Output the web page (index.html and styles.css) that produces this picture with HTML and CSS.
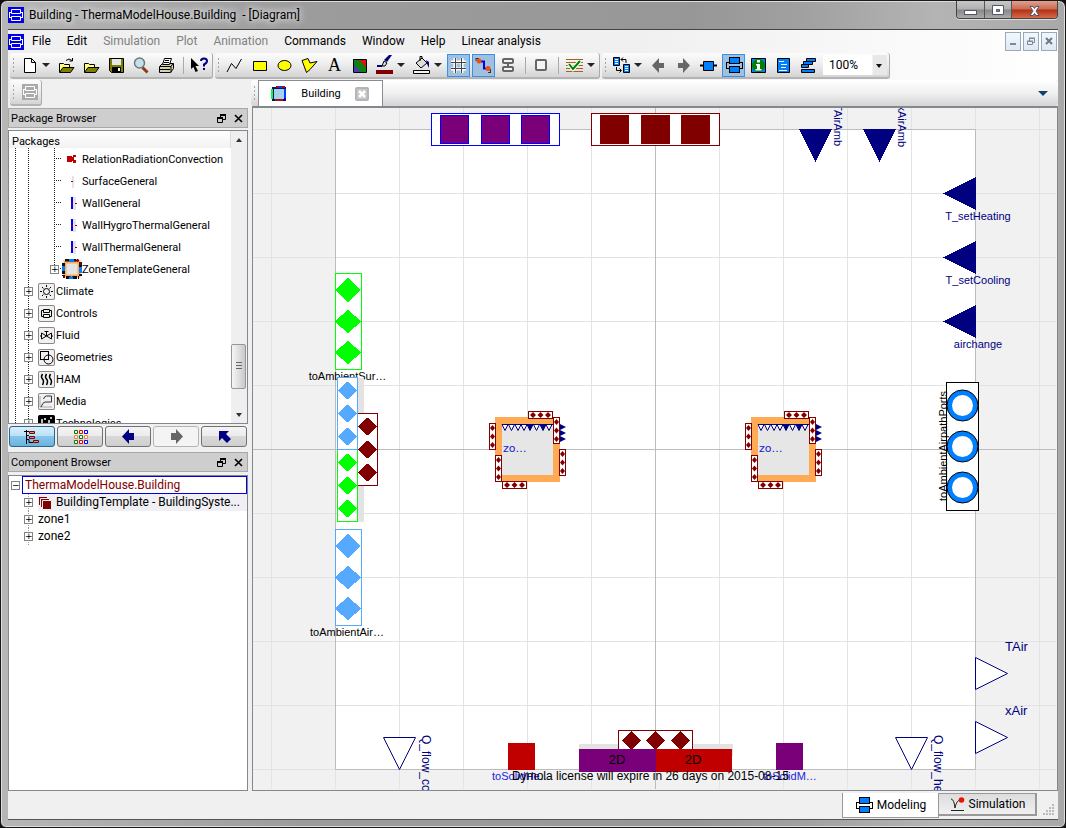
FILE: index.html
```html
<!DOCTYPE html>
<html lang="en">
<head>
<meta charset="utf-8">
<title>Building - ThermaModelHouse.Building - [Diagram]</title>
<link rel="stylesheet" href="styles.css">
</head>
<body>
<svg class="defs" aria-hidden="true">
  <defs>
    <symbol id="logo" viewBox="0 0 16 16"><rect width="16" height="16" fill="#0000e8"/><path d="M3.5 2.5h9v4h-9zM3.5 9.5h9v4h-9zM1 5.500h2.500M12.500 5.500H15M1 10.500h2.500M12.500 10.500H15M1.500 5.500v5M14.500 5.500v5" fill="none" stroke="#fff"/></symbol>
    <symbol id="float" viewBox="0 0 9 9"><path d="M3 1h6M0 4h6" stroke="#000" stroke-width="2"/><path d="M3.500 1v3M8.500 1v4.500H6M.5 4v4.500h5V4" fill="none" stroke="#000"/></symbol>
    <symbol id="cross" viewBox="0 0 9 9"><path d="M1 1l7 7M8 1L1 8" stroke="#000" stroke-width="1.600"/></symbol>
    <symbol id="folder" viewBox="0 0 17 15"><path d="M1.500 13V4.500h4l1 1h5V8" fill="#ffff80" stroke="#000"/><path d="M1.500 13.500L5 8.500h11L12.500 13.500z" fill="#808000" stroke="#000"/></symbol>
    <symbol id="model" viewBox="0 0 18 18"><rect x="4.500" y="1.500" width="10" height="6" fill="#0080ff" stroke="#000"/><rect x="4.500" y="10.500" width="10" height="6" fill="#0080ff" stroke="#000"/><path d="M1 6.500h3.500M14.500 6.500H18M1 12.500h3.500M14.500 12.500H18M1.500 6.500v6M17.500 6.500v6" stroke="#000"/></symbol>
    <symbol id="wall" viewBox="0 0 16 16"><path d="M9 2h3v13H9z" fill="#e4e4e4"/><path d="M7 2h2v12H7z" fill="#00f"/><path d="M11 8.500h2M7 8.500h2" stroke="#900"/></symbol>
    <symbol id="port3" viewBox="0 0 25 8"><rect x=".5" y=".5" width="24" height="7" fill="#fff" stroke="#800000"/><path d="M5 1l3 3-3 3-3-3zM12.500 1l3 3-3 3-3-3zM20 1l3 3-3 3-3-3z" fill="#800000"/></symbol>
    <symbol id="port3v" viewBox="0 0 7 27"><rect x=".5" y=".5" width="6" height="26" fill="#fff" stroke="#800000"/><path d="M3.500 2l2.500 3-2.500 3L1 5zM3.500 10.500l2.500 3-2.500 3-2.500-3zM3.500 19l2.500 3-2.500 3L1 22z" fill="#800000"/></symbol>
    <pattern id="grid" x="271" y="129" width="64" height="64" patternUnits="userSpaceOnUse"><path d="M.5 0v64M0 .5h64" stroke="#e3e3e3"/></pattern>
    <g id="zone">
      <rect x="495" y="417" width="65" height="65" fill="#ffaa55"/>
      <rect x="502" y="424" width="51" height="51" fill="#e6e6e6"/>
      <g stroke="#000080" fill="#fff">
        <path d="M502 424.500h6l-3 6zM508.500 424.500h6l-3 6zM515 424.500h6l-3 6zM521 424.500h6l-3 6zM533.500 424.500h6l-3 6zM546 424.500h6l-3 6z"/>
        <path d="M527 424.500h6l-3 6zM540 424.500h6l-3 6zM502 424.500h51" fill="#000080"/>
      </g>
      <use href="#port3" x="528" y="411" width="25" height="8"/>
      <use href="#port3" x="502" y="481" width="25" height="8"/>
      <use href="#port3v" x="553" y="417" width="7" height="27"/>
      <use href="#port3v" x="489" y="423" width="7" height="27"/>
      <use href="#port3v" x="495" y="455" width="7" height="27"/>
      <use href="#port3v" x="559" y="449" width="7" height="27"/>
      <path d="M560 424l6 3-6 3zM560 430l6 3-6 3zM560 436l6 3-6 3z" fill="#000080"/>
      <text x="503" y="452" fill="#2020d0" class="dg-ui">zo…</text>
    </g>
  </defs>
</svg>

<div class="window">
  <header class="titlebar">
    <svg class="i16"><use href="#logo"/></svg>
    <h1>Building - ThermaModelHouse.Building&nbsp; - [Diagram]</h1>
    <div class="winctl">
      <button aria-label="Minimize"><svg width="27" height="17"><rect x="7.500" y="9.500" width="12" height="4" fill="#fff" stroke="#535666"/></svg></button>
      <button aria-label="Maximize"><svg width="26" height="17"><path d="M7.500 4.500h11v9h-11zM11.500 8.500h3v2h-3z" fill="#fff" fill-rule="evenodd" stroke="#535666"/></svg></button>
      <button class="close" aria-label="Close"><svg width="45" height="17"><path d="M18 5.500h3l1.500 2 1.500-2h3l-3 4.500 3 4.500h-3l-1.500-2-1.500 2h-3l3-4.500z" fill="#fff" stroke="#535666"/></svg></button>
    </div>
  </header>

  <div class="client">
    <nav class="menubar">
      <svg class="i16"><use href="#logo"/></svg>
      <button>File</button><button>Edit</button><button disabled>Simulation</button><button disabled>Plot</button><button disabled>Animation</button><button>Commands</button><button>Window</button><button>Help</button><button>Linear analysis</button>
      <div class="mdi">
        <button aria-label="Minimize document"><svg width="14" height="14"><path d="M4 10h6" stroke="#7b8a98" stroke-width="2"/></svg></button>
        <button aria-label="Restore document"><svg width="14" height="14"><path d="M5.500 7V4.500h5v4H8M3.500 7.500h5v3h-5zM5 4h6M3 7h6" fill="none" stroke="#7b8a98"/></svg></button>
        <button aria-label="Close document"><svg width="14" height="14"><path d="M4 4l6 6M10 4l-6 6" stroke="#6b7a88" stroke-width="2"/></svg></button>
      </div>
    </nav>

    <div class="toolrow">
      <div class="toolbar">
        <i class="grip"></i>
        <button class="tb" aria-label="New"><svg width="17" height="17"><path d="M3.500 1.500h7l4 4v10h-11zM10.500 1.500v4h4" fill="#fff" stroke="#000"/></svg></button>
        <button class="dd" aria-label="New menu"></button>
        <button class="tb" aria-label="Open"><svg width="17" height="17"><use href="#folder" y="2" width="17" height="15"/><path d="M8 3.500q3-3 6 0M14.500 1v3h-3" fill="none" stroke="#000"/></svg></button>
        <button class="tb" aria-label="Load"><svg width="17" height="17"><use href="#folder" y="2" width="17" height="15"/></svg></button>
        <button class="tb" aria-label="Save"><svg width="17" height="17"><path d="M1.500 1.500h14v14h-12l-2-2z" fill="#808000" stroke="#000"/><path d="M4 2h9v6H4z" fill="#e8e8e8"/><path d="M4 10h9v5H4z"/><path d="M10 11h2v3h-2z" fill="#fff"/></svg></button>
        <button class="tb" aria-label="Zoom"><svg width="17" height="17"><path d="M9.500 10.500l5 5" stroke="#8a3c14" stroke-width="3"/><circle cx="6.500" cy="6" r="5" fill="#bfe3ee" stroke="#777" stroke-width="1.500"/></svg></button>
        <button class="tb" aria-label="Print"><svg width="17" height="17"><path d="M1.500 9.500l3-3h11v5l-3 4h-11z" fill="#d0d0b8" stroke="#000"/><path d="M4.500 7.500l2-6h7l-2 6z" fill="#fff" stroke="#000"/><path d="M2 9.500h11v6M7 3.500h4M6 5.500h5M13 9.500l2-3M2 12.500h10" stroke="#000" fill="none"/><path d="M8 11h3" stroke="#e8e800"/></svg></button>
        <i class="sep"></i>
        <button class="tb" aria-label="What's this"><svg width="19" height="17"><path d="M1 1l8 8H5.500l2.500 5-2.500 1-2-5L1 12z"/><path d="M11 4q0-2.500 3-2.500t3 2.500q0 2-3 3.500v2" fill="none" stroke="#000080" stroke-width="2"/><path d="M13 11h2v2h-2z" fill="#000080"/></svg></button>
      </div>
      <div class="toolbar">
        <i class="grip"></i>
        <button class="tb" aria-label="Line"><svg width="17" height="17"><path d="M1 15L5.500 6.500 10 11.500 15.500 2" fill="none" stroke="#000"/></svg></button>
        <button class="tb" aria-label="Rectangle"><svg width="17" height="17"><path d="M2.500 4.500h13v9h-13z" fill="#ff0" stroke="#000"/></svg></button>
        <button class="tb" aria-label="Ellipse"><svg width="17" height="17"><ellipse cx="8.500" cy="8.500" rx="6.500" ry="5" fill="#ff0" stroke="#000"/></svg></button>
        <button class="tb" aria-label="Polygon"><svg width="17" height="17"><path d="M1 3.500l6-2 2 4.500 7-1.500-7 8-3.500 3z" fill="#ff0" stroke="#000"/></svg></button>
        <button class="tb letter" aria-label="Text">A</button>
        <button class="tb" aria-label="Bitmap"><svg width="17" height="17"><path d="M2 2h13v13H2z" fill="#108010"/><path d="M7 2h8v8z" fill="#e01010"/><path d="M2 7l8 8H2z" fill="#4040b0"/><path d="M2.500 2.500h13v13h-13z" fill="none" stroke="#000"/></svg></button>
        <button class="tb" aria-label="Line color"><svg width="19" height="20"><path d="M17 0l-5 7-3-2 5-5z" fill="#000080"/><path d="M9 6l3 2-2 3H7z" fill="#ddd" stroke="#000"/><path d="M2 11h5" stroke="#000080" stroke-width="2"/><path d="M1 15h17v4H1z" fill="#800000"/></svg></button>
        <button class="dd" aria-label="Line color menu"></button>
        <button class="tb" aria-label="Fill color"><svg width="19" height="20"><path d="M4 8l6-5 5 5-6 5z" fill="#ddd" stroke="#000"/><path d="M8 6V1.500h2V4" fill="none" stroke="#000"/><path d="M14 5l3 2v6l-2-4z" fill="#000080"/><path d="M1.500 15.500h16v3h-16z" fill="#f4f4f4" stroke="#000"/></svg></button>
        <button class="dd" aria-label="Fill color menu"></button>
        <button class="tb on" aria-label="Grid"><svg width="17" height="17"><path d="M5 1v15M12 1v15M1 5h15M1 12h15" stroke="#fff" stroke-width="3"/><path d="M5.500 1v15M11.500 1v15M1 5.500h15M1 11.500h15" stroke="#444"/></svg></button>
        <button class="tb on" aria-label="Connect mode"><svg width="17" height="17"><path d="M5 4.500h4v7h5" fill="none" stroke="#0000e0" stroke-width="2"/><path d="M1 1v3M1 1.500h3M15.500 12v4M13 15.500h3" stroke="#333"/><circle cx="4" cy="4" r="2.500" fill="#f05010"/><circle cx="13" cy="11.500" r="2.500" fill="#f05010"/></svg></button>
        <button class="tb" aria-label="Align"><svg width="17" height="17"><rect x="3" y="2" width="10" height="4" rx="1" fill="#f4f4f4" stroke="#666" stroke-width="2"/><rect x="3" y="10" width="10" height="4" rx="1" fill="#f4f4f4" stroke="#666" stroke-width="2"/><path d="M8 7v2" stroke="#666" stroke-width="2"/></svg></button>
        <i class="sep"></i>
        <button class="tb" aria-label="Shape"><svg width="17" height="17"><rect x="3" y="3" width="10" height="10" rx="1" fill="#f4f4f4" stroke="#666" stroke-width="2"/></svg></button>
        <i class="sep"></i>
        <button class="tb" aria-label="Check"><svg width="17" height="17"><path d="M0 2.500h17M0 5.500h17M0 8.500h17M0 11.500h17M0 14.500h17" stroke="#a0641e"/><path d="M3 7l4 5 7-8" fill="none" stroke="#fff" stroke-width="4"/><path d="M3 7l4 5 7-8" fill="none" stroke="#008000" stroke-width="2"/></svg></button>
        <button class="dd" aria-label="Check menu"></button>
      </div>
      <div class="toolbar">
        <i class="grip"></i>
        <button class="tb" aria-label="History"><svg width="17" height="17"><path d="M.5.5h6v8h-6zM10.500 7.500h6v8h-6z" fill="#0080ff" stroke="#000"/><path d="M2 2.500h3M2 4.500h3M2 6.500h3M12 9.500h3M12 11.500h3M12 13.500h3" stroke="#fff"/><path d="M8 2.500h5V6M10 .5l-2 2 2 2M3.500 10v3.500H8M6.500 11.500l2 2-2 2" fill="none" stroke="#000"/></svg></button>
        <button class="dd" aria-label="History menu"></button>
        <button class="tb" aria-label="Previous"><svg width="17" height="17"><path d="M2 8.500L9 1v5h5v5H9v5z" fill="#666"/></svg></button>
        <button class="tb" aria-label="Next"><svg width="17" height="17"><path d="M15 8.500L8 1v5H3v5h5v5z" fill="#666"/></svg></button>
        <button class="tb" aria-label="Icon"><svg width="17" height="17"><path d="M0 8.500h17" stroke="#000" stroke-width="2"/><path d="M3.500 4.500h10v9h-10z" fill="#0080ff" stroke="#000"/></svg></button>
        <button class="tb on" aria-label="Diagram"><svg width="18" height="18"><use href="#model"/></svg></button>
        <button class="tb" aria-label="Documentation"><svg width="17" height="17"><path d="M1.500 1.500h14v14h-14z" fill="#0080ff" stroke="#000"/><circle cx="8.500" cy="8.500" r="6.500" fill="#008000"/><path d="M7 3h3v2.500H7zM6 7h4v5h1.500v1.500h-6V12H7V8.500H6z" fill="#fff"/></svg></button>
        <button class="tb" aria-label="Modelica text"><svg width="17" height="17"><path d="M2.500 1.500h12v14h-12z" fill="#0080ff" stroke="#000"/><path d="M4 4.500h5M6 7.500h6M6 10.500h5M4 13.500h8" stroke="#fff"/></svg></button>
        <button class="tb" aria-label="Used classes"><svg width="17" height="17"><path d="M6.500 1.500h9v3h-9zM3.500 4.500h9v3h-9zM1.500 7.500h7v3h-7zM1.500 12.500h13v3h-13z" fill="#0080ff" stroke="#000"/></svg></button>
        <select class="zoom" aria-label="Zoom factor"><option>100%</option></select>
      </div>
    </div>

    <div class="work">
      <aside class="side">
        <div class="minirow"><div class="toolbar"><i class="grip"></i><button class="tb" aria-label="Model view" disabled><svg width="16" height="16"><path d="M0 0h16v16H0z" fill="#aaa"/><path d="M3.500 2.500h9v4h-9zM3.500 9.500h9v4h-9zM1 5.500h2.500M12.500 5.500H15M1 10.500h2.500M12.500 10.500H15M1.500 5.500v5M14.500 5.500v5" fill="none" stroke="#fff"/></svg></button></div></div>
        <div class="dockhead"><h2>Package Browser</h2><button aria-label="Float packages"><svg class="i9"><use href="#float"/></svg></button><button aria-label="Close packages"><svg class="i9"><use href="#cross"/></svg></button></div>
        <div class="tree packages">
          <div class="colhead">Packages</div>
          <ul class="rows">
            <li class="l3"><svg class="i16"><path d="M3 5h5v6H3zM8 6h1v4H8zM9 4h3v2h-2v3h2v3H9z" fill="#c00000"/></svg>RelationRadiationConvection</li>
            <li class="l3"><svg class="i16"><path d="M8 3h2v12H8z" fill="#e4e4e4"/><path d="M7 8.500h2" stroke="#900"/></svg>SurfaceGeneral</li>
            <li class="l3"><svg class="i16"><use href="#wall"/></svg>WallGeneral</li>
            <li class="l3"><svg class="i16"><use href="#wall"/></svg>WallHygroThermalGeneral</li>
            <li class="l3"><svg class="i16"><use href="#wall"/></svg>WallThermalGeneral</li>
            <li class="l3 last"><button class="exp" aria-label="Expand ZoneTemplateGeneral">+</button><svg width="20" height="20"><path d="M3 3h14v14H3z" fill="#e4e4e4" stroke="#ffaa55" stroke-width="3"/><path d="M3 1h13M1.500 4v13M18.500 3v14M4 18.500h13" stroke="#101010" stroke-width="3" stroke-dasharray="5 1"/><path d="M7 1.500h5M1.500 7v5M18.500 8v6M7 19h4" stroke="#0080ff" stroke-width="3"/><path d="M13 1.500h4M18.500 3v3M2 17v2" stroke="#800000" stroke-width="2"/></svg>ZoneTemplateGeneral</li>
            <li class="l2"><button class="exp" aria-label="Expand Climate">+</button><svg class="pk"><circle cx="8.500" cy="8.500" r="3" fill="none" stroke="#000"/><path d="M8.500 2v2M8.500 13v2M2 8.500h2M13 8.500h2M4 4l1.500 1.500M11.500 11.500L13 13M13 4l-1.500 1.500M4 13l1.500-1.500" stroke="#000"/></svg>Climate</li>
            <li class="l2"><button class="exp" aria-label="Expand Controls">+</button><svg class="pk"><path d="M5.500 4.500h6v3h-6zM5.500 9.500h6v3h-6zM5 5.500H3.500v6H5M12 5.500h1.500v6H12" fill="none" stroke="#000"/></svg>Controls</li>
            <li class="l2"><button class="exp" aria-label="Expand Fluid">+</button><svg class="pk"><path d="M3.500 6v6l5-3-5-3M13.500 6v6l-5-3 5-3M8.500 9V5M6.500 4.500h4M2 9h2M13 9h2" fill="none" stroke="#000"/></svg>Fluid</li>
            <li class="l2"><button class="exp" aria-label="Expand Geometries">+</button><svg class="pk"><rect x="2.500" y="2.500" width="8" height="8" fill="none" stroke="#000"/><circle cx="10.500" cy="10.500" r="4.500" fill="none" stroke="#000"/></svg>Geometries</li>
            <li class="l2"><button class="exp" aria-label="Expand HAM">+</button><svg class="pk"><path d="M4.500 3q-2 3 0 5t0 6M8.500 3q-2 3 0 5t0 6M12.500 3q-2 3 0 5t0 6" fill="none" stroke="#000" stroke-width="1.500"/></svg>HAM</li>
            <li class="l2"><button class="exp" aria-label="Expand Media">+</button><svg class="pk"><path d="M2 3v11h12" stroke="#aaa" fill="none"/><path d="M5.500 6q1-3 3-3h5v6H7q-2 0-4 5" fill="none" stroke="#333"/></svg>Media</li>
            <li class="l2"><button class="exp" aria-label="Expand Technologies">+</button><svg class="pk"><path d="M0 0h17v17H0z"/><path d="M4 4v8M7 3v2M12 3h2M11 5v6" stroke="#fff" stroke-width="1.500"/></svg>Technologies</li>
          </ul>
          <div class="scroll" aria-hidden="true"><i class="up"></i><i class="thumb"></i><i class="down"></i></div>
        </div>
        <div class="navbtns">
          <button class="sel" aria-label="Tree view"><svg width="16" height="14"><path d="M2.500 0v14M0 1.500h5M2 5.500h3M2 9.500h3v3h4" stroke="#000" fill="none"/><path d="M5.500 1.500h5v2h-5zM5.500 6.500h5v2h-5zM9.500 10.500h5v2h-5z" fill="#d09090" stroke="#800000"/></svg></button>
          <button aria-label="Icon view"><svg width="15" height="15"><g fill="#fff"><path d="M1.500 1.500h3v3h-3zM6.500 6.500h3v3h-3zM1.500 11.500h3v3h-3z" stroke="#008000"/><path d="M6.500 1.500h3v3h-3zM6.500 11.500h3v3h-3z" stroke="#f00"/><path d="M11.500 1.500h3v3h-3zM11.500 11.500h3v3h-3z" stroke="#00f"/><path d="M1.500 6.500h3v3h-3zM11.500 6.500h3v3h-3z" stroke="#ff8040"/></g></svg></button>
          <button aria-label="Back"><svg width="15" height="15"><path d="M1 7.500L8 0v4h5v7H8v4z" fill="#000080"/></svg></button>
          <button disabled aria-label="Forward"><svg width="15" height="15"><path d="M14 7.500L7 0v4H2v7h5v4z" fill="#666"/></svg></button>
          <button aria-label="Up"><svg width="15" height="15"><path d="M2 2h10L9 5l5 5-4 4-5-5-3 3z" fill="#000080"/></svg></button>
        </div>
        <div class="dockhead"><h2>Component Browser</h2><button aria-label="Float components"><svg class="i9"><use href="#float"/></svg></button><button aria-label="Close components"><svg class="i9"><use href="#cross"/></svg></button></div>
        <ul class="tree comps">
          <li class="root"><button class="exp" aria-label="Collapse">−</button><span>ThermaModelHouse.Building</span></li>
          <li class="ext"><button class="exp" aria-label="Expand BuildingTemplate">+</button><span><svg width="14" height="14"><path d="M1 1h8v8H1z" fill="#800000"/><path d="M2.500 2.500h9v9h-9z" fill="#800000" stroke="#f0f0f4"/><path d="M4.500 4.500h9v9h-9z" fill="#800000" stroke="#f0f0f4"/></svg>BuildingTemplate - BuildingSyste...</span></li>
          <li><button class="exp" aria-label="Expand zone1">+</button>zone1</li>
          <li><button class="exp" aria-label="Expand zone2">+</button>zone2</li>
        </ul>
      </aside>

      <main class="doc">
        <div class="tabs">
          <i class="grip"></i>
          <div class="tab"><svg width="16" height="16"><path d="M2 2h12v12H2z" fill="#a8d0f0" stroke="#101060" stroke-width="2"/><path d="M1 3v10" stroke="#0f4" stroke-width="2"/><path d="M4 14h8M5 1h3M11 1h3" stroke="#a01010" stroke-width="2"/><path d="M14 3v9M8 1h3" stroke="#0040ff" stroke-width="2"/></svg><span>Building</span><button aria-label="Close tab"><svg width="14" height="14"><rect width="14" height="14" rx="2" fill="#b4b4b4"/><rect x="2" y="2" width="10" height="10" fill="#c8c8c8"/><path d="M4 4l6 6M10 4l-6 6" stroke="#fff" stroke-width="2.500"/></svg></button></div>
          <button class="tablist" aria-label="List tabs"></button>
        </div>
        <div class="canvas">
<svg viewBox="253 108 804 682" preserveAspectRatio="xMidYMid meet" role="img" aria-label="Building diagram">
  <rect x="253" y="108" width="804" height="682" fill="#f1f1f1"/>
  <rect x="335" y="129" width="640" height="640" fill="#fff"/>
  <rect x="253" y="108" width="803" height="681" fill="url(#grid)"/>
  <path d="M335.500 129.500h640v640h-640zM655.500 108v681M253 449.500h803" fill="none" stroke="#bcbcbc"/>

  <g shape-rendering="crispEdges">
    <rect x="431.500" y="113.500" width="128" height="32" fill="#fff" stroke="#00f"/>
    <path d="M440.500 115.500h28v28h-28zM481.500 115.500h28v28h-28zM521.500 115.500h28v28h-28z" fill="#7a007a" stroke="#00f"/>
    <rect x="591.500" y="113.500" width="128" height="32" fill="#fff" stroke="#800000"/>
    <path d="M600 115h29v29h-29zM641 115h29v29h-29zM681 115h29v29h-29z" fill="#800000"/>

    <g fill="#000080">
      <path d="M799 129h33l-16.500 33zM863 129h33l-16.500 33z"/>
      <path d="M943 193.500l33-16.500v33zM943 257.500l33-16.500v33zM943 321.500l33-16.500v33z"/>
    </g>

    <path d="M335.500 273.500h26v96h-26z" fill="#fff" stroke="#0f0"/>
    <path d="M348 278l13 12-13 12-13-12zM348 309.500l13 12-13 12-13-12zM348 340.500l13 12-13 12-13-12z" fill="#0f0"/>
  </g>
  <text x="347.500" y="380" text-anchor="middle" class="dg">toAmbientSur…</text>
  <g shape-rendering="crispEdges">
    <path d="M338 378h26v144h-26z" fill="#e3e3e3"/>
    <path d="M357.500 413.500h20v72h-20z" fill="#fff" stroke="#800000"/>
    <path d="M367.500 417.500l9.500 9-9.500 9-9.500-9zM367.500 440.500l9.500 9-9.500 9-9.500-9zM367.500 463.500l9.500 9-9.500 9-9.500-9z" fill="#800000"/>
    <path d="M337.500 449.500h20v72h-20z" fill="#fff" stroke="#0f0"/>
    <path d="M337.500 377.500h20v72h-20z" fill="#fff" stroke="#55aaff"/>
    <path d="M347.500 381.500l9.500 9-9.500 9-9.500-9zM347.500 404.500l9.500 9-9.500 9-9.500-9zM347.500 427.500l9.500 9-9.500 9-9.500-9z" fill="#55aaff"/>
    <path d="M347.500 453.500l9.500 9-9.500 9-9.500-9zM347.500 476.500l9.500 9-9.500 9-9.500-9zM347.500 499.500l9.500 9-9.500 9-9.500-9z" fill="#0f0"/>
    <path d="M335.500 529.500h26v96h-26z" fill="#fff" stroke="#55aaff"/>
    <path d="M348 534l13 12-13 12-13-12zM348 565.500l13 12-13 12-13-12zM348 596.500l13 12-13 12-13-12z" fill="#55aaff"/>
  </g>
  <text x="347" y="636" text-anchor="middle" class="dg">toAmbientAir…</text>

  <use href="#zone"/>
  <use href="#zone" x="256"/>

  <g class="dg navy">
    <text x="978" y="220" text-anchor="middle">T_setHeating</text>
    <text x="978" y="284" text-anchor="middle">T_setCooling</text>
    <text x="978" y="348" text-anchor="middle">airchange</text>
    <text transform="translate(834 146) rotate(90)" text-anchor="end">TAirAmb</text>
    <text transform="translate(898 147) rotate(90)" text-anchor="end">xAirAmb</text>
    <text transform="translate(422 735) rotate(90)" class="dg-m">Q_flow_conv</text>
    <text transform="translate(934 735) rotate(90)" class="dg-m">Q_flow_heat</text>
    <text x="1005" y="651" class="dg-l">TAir</text>
    <text x="1005" y="715" class="dg-l">xAir</text>
  </g>
  <path d="M975.500 657.500l32 16-32 16zM975.500 721.500l32 16-32 16zM383.500 737.500h32l-16 32zM895.500 737.500h32l-16 32z" fill="#fff" stroke="#000080"/>

  <rect x="946.500" y="382.500" width="32" height="128" fill="#fff" stroke="#000"/>
  <g fill="#0080ff" stroke="#000"><circle cx="962.500" cy="405.500" r="15.500"/><circle cx="962.500" cy="446.500" r="15.500"/><circle cx="962.500" cy="487.500" r="15.500"/></g>
  <g fill="#fff"><circle cx="962.500" cy="405.500" r="10.500"/><circle cx="962.500" cy="446.500" r="10.500"/><circle cx="962.500" cy="487.500" r="10.500"/></g>
  <text transform="translate(947 501) rotate(-90)" class="dg">toAmbientAirpathPorts</text>

  <g shape-rendering="crispEdges">
    <path d="M508 743h27v27h-27z" fill="#c00000"/>
    <path d="M776 743h27v27h-27z" fill="#7a007a"/>
    <path d="M579 744h154v12H579z" fill="#e3e3e3"/>
    <path d="M618.500 730.500h74v20h-74z" fill="#fff" stroke="#800000"/>
    <path d="M631 731l9.500 9.500-9.500 9.500-9.500-9.500zM655.500 731l9.500 9.500-9.500 9.500-9.500-9.500zM680 731l9.500 9.500-9.500 9.500-9.500-9.500z" fill="#800000"/>
    <path d="M579 749h77v23h-77z" fill="#7a007a"/>
    <path d="M656 749h76v23h-76z" fill="#c00000"/>
  </g>
  <g text-anchor="middle" class="dg-l"><text x="617" y="764">2D</text><text x="693" y="764">2D</text></g>
  <g class="dg blue"><text x="492" y="780">toSolidHe…</text><text x="763" y="780">toSolidM…</text></g>
  <text x="512" y="780" class="dg-m">Dymola license will expire in 26 days on 2015-08-15</text>
</svg>
        </div>
      </main>
    </div>

    <footer class="status">
      <button class="mode cur"><svg width="18" height="18"><use href="#model"/></svg>Modeling</button>
      <button class="mode"><svg width="16" height="16"><path d="M2 3q3 0 4 9 1-7 6-9M2 14.500h13" fill="none" stroke="#222"/><circle cx="12.500" cy="4" r="2.800" fill="#f01000"/></svg>Simulation</button>
      <svg class="size" width="11" height="11"><path d="M9 1h2M6 4h2M9 4h2M3 7h2M6 7h2M9 7h2M0 10h2M3 10h2M6 10h2M9 10h2" stroke="#bbb" stroke-width="2"/></svg>
    </footer>
  </div>
</div>
</body>
</html>
```
FILE: styles.css
```css
* { box-sizing: border-box; }
body {
  margin: 0;
  background: #111;
  font: 12px/17px Roboto, "Open Sans", sans-serif;
  color: #000;
}
h1, h2, ul { margin: 0; padding: 0; font: inherit; list-style: none; }
button { margin: 0; padding: 0; border: 0; background: none; font: inherit; color: inherit; }
svg { display: block; flex: none; }
.defs { position: absolute; width: 0; height: 0; }
.i16 { width: 16px; height: 16px; }
.i9 { width: 9px; height: 9px; }

.window {
  height: 100vh;
  display: flex;
  flex-direction: column;
  padding: 0 7px 7px;
  border: 1px solid #1a1a1a;
  border-radius: 7px 7px 6px 6px;
  background: linear-gradient(90deg, #b6b6b6, #9c9c9c 28%, #979797 65%, #a0a0a0 75%, #b4b4b4 88%, #a8a8a8);
  box-shadow: inset 0 0 0 1px #ddd;
}
.titlebar { flex: 0 0 28px; display: flex; align-items: center; gap: 5px; }
.titlebar h1 { flex: 1; text-shadow: 0 0 6px #eee, 0 0 8px #eee; white-space: nowrap; }
.winctl { display: flex; align-self: flex-start; border: 1px solid #444; border-top: 0; border-radius: 0 0 4px 4px; overflow: hidden; box-shadow: 0 1px #ddd; }
.winctl button { border-right: 1px solid #555; background: linear-gradient(#c8c8c8, #b0b0b0 48%, #888 52%, #aaa); }
.winctl .close { border-right: 0; background: linear-gradient(#e0a090, #cc6a50 48%, #b03018 52%, #d86a48); }

.client { flex: 1; min-height: 0; display: flex; flex-direction: column; border-top: 1px solid #444; border-bottom: 1px solid #555; background: #f0f0f0; }
.menubar { flex: 0 0 23px; display: flex; align-items: center; background: linear-gradient(90deg, #f0f0f0 60%, #fff); }
.menubar > .i16 { margin-right: 8px; }
.menubar > button { margin-right: 16px; }
.menubar > button:disabled { color: #808080; }
.mdi { display: flex; gap: 2px; margin-left: auto; margin-right: 1px; }
.mdi button { border: 1px solid #9aa8b8; background: linear-gradient(#f2f7fc, #dfe9f4); padding: 1px 0 2px; }

.toolrow { flex: 0 0 27px; display: flex; gap: 3px; padding: 0 2px; background: linear-gradient(90deg, #f0f0f0 60%, #fff); }
.toolbar { display: flex; align-items: center; height: 26px; margin-right: -1px; border-radius: 3px; border-right: 1px solid #aaa; border-bottom: 2px solid #b4b4b4; background: linear-gradient(#fcfcfc, #ececec 50%, #d4d4d4); }
.grip { flex: none; width: 7px; height: 16px; background: radial-gradient(circle, #a4a4a4 1px, transparent 1px) 0 0 / 7px 4px; }
.tb { flex: none; width: 25px; height: 23px; display: flex; align-items: center; justify-content: center; }
.tb.on { width: 23px; margin: 0 1px; border: 1px solid #3890e8; background: #a0c0e0; }
.letter { font: 18px/20px "Liberation Serif", serif; }
.dd { width: 12px; height: 23px; }
.dd::before { content: ""; display: block; width: 0; border: 4px solid transparent; border-top-color: #222; border-bottom: 0; }
.sep { width: 8px; height: 17px; background: linear-gradient(#aaa, #aaa) 4px 0 / 1px 100% no-repeat; }
.zoom { width: 64px; height: 20px; margin: 0 2px; padding: 0 6px; border: 0; font: 12px/20px Roboto, sans-serif; appearance: none; background: linear-gradient(90deg, #fff 49px, #e8e8e8 50px); }
.toolbar:has(.zoom) { position: relative; }
.toolbar:has(.zoom)::after { content: ""; position: absolute; right: 7px; top: 11px; border: 3px solid transparent; border-top: 4px solid #111; border-bottom: 0; }

.work { flex: 1; min-height: 0; display: flex; gap: 2px; }
.side { flex: 0 0 240px; min-width: 0; display: flex; flex-direction: column; }
.minirow { flex: 0 0 28px; display: flex; padding-left: 2px; }
.minirow .toolbar { width: 32px; height: 26px; }
.dockhead { flex: 0 0 20px; display: flex; align-items: center; gap: 8px; padding: 0 4px 0 2px; border: 1px solid #a8a8a8; background: #cecece; font-size: 11px; }
.dockhead h2 { flex: 1; }
.tree { background: #fff; border: 1px solid #828790; }
.packages { position: relative; flex: 0 0 294px; margin-top: 2px; overflow: hidden; font-size: 11px; }
.colhead { height: 17px; padding-left: 3px; margin-right: 16px; border-right: 1px solid #ddd; background: linear-gradient(#fff, #f2f2f2); line-height: 21px; }
.rows { background: repeating-linear-gradient(#222 0 1px, transparent 1px 2px) 6px 0 / 1px 100% no-repeat, repeating-linear-gradient(#222 0 1px, transparent 1px 2px) 19px 0 / 1px 100% no-repeat; }
.rows li { display: flex; align-items: center; height: 22px; white-space: nowrap; }
.rows .l3 { padding-left: 45px; background: repeating-linear-gradient(#222 0 1px, transparent 1px 2px) 45px 0 / 1px 100% no-repeat, repeating-linear-gradient(90deg, #222 0 1px, transparent 1px 2px) 45px 10px / 7px 1px no-repeat; }
.rows .l3 > .i16 { margin: 0 2px 0 10px; }
.rows .l3.last { padding-left: 41px; background-size: 1px 8px, 12px 1px; }
.last .exp { margin-right: 3px; }
.rows .l2 { padding-left: 15px; }
.exp { flex: none; width: 9px; height: 9px; border: 1px solid #848484; background: #fff; font: 9px/7px "DejaVu Sans", sans-serif; text-align: center; }
.l2 .exp { margin-right: 5px; }
.pk { width: 17px; height: 17px; margin-right: 1px; border-radius: 2px; background: #f0f0f0; box-shadow: inset 0 0 0 1px #888; }
.scroll { position: absolute; top: 0; right: 0; bottom: 0; width: 16px; background: #efefef; }
.scroll i { position: absolute; left: 5px; border: 3px solid transparent; }
.scroll .up { top: 7px; border-top: 0; border-bottom: 4px solid #333; }
.scroll .down { bottom: 6px; border-bottom: 0; border-top: 4px solid #333; }
.scroll .thumb { left: 0; right: 1px; top: 73%; height: 45px; border: 1px solid #979797; border-radius: 2px; background: repeating-linear-gradient(#666 0 1px, transparent 1px 3px) 4px 17px / 6px 9px no-repeat, linear-gradient(90deg, #f6f6f6, #e0e0e0 50%, #c8c8c8); }
.navbtns { flex: 0 0 21px; display: flex; gap: 2px; margin: 2px 1px 5px; }
.navbtns button { flex: 1; display: flex; align-items: center; justify-content: center; border: 1px solid #707070; border-radius: 3px; background: linear-gradient(#f4f4f4, #ebebeb 50%, #d8d8d8 50%, #cfcfcf); }
.navbtns button:disabled { border-color: #b4b4b4; background: #f4f4f4; }
.navbtns .sel { border-color: #2c628b; background: linear-gradient(#d8eefb, #b8e0f6 50%, #86c6ec 50%, #68b3db); }
.comps { flex: 1; margin-top: 3px; line-height: 17px; }
.comps li { display: flex; align-items: center; height: 17px; padding-left: 15px; white-space: nowrap; background: repeating-linear-gradient(#999 0 1px, transparent 1px 2px) 19px 0 / 1px 100% no-repeat; }
.comps .root { padding-left: 2px; background: none; height: 18px; }
.comps .exp { margin-right: 5px; }
.comps .root .exp { margin-right: 2px; }
.root span { flex: 1; height: 18px; padding-left: 2px; border: 1px solid #0000e0; color: #800000; line-height: 17px; }
.ext span { flex: 1; display: flex; align-items: center; gap: 4px; background: #f0f0f4; }

.doc { flex: 1; min-width: 0; display: flex; flex-direction: column; }
.tabs { flex: 0 0 26px; display: flex; align-items: center; background: linear-gradient(#fff, #f0f0f0 50%, #d4d4d4); border-radius: 3px; margin-left: 1px; }
.tab { align-self: stretch; display: flex; align-items: center; width: 125px; padding: 0 13px 0 12px; border: 1px solid #888c94; border-bottom: 0; background: #fff; font-size: 11px; }
.tab span { flex: 1; text-align: center; }
.tablist { margin-left: auto; margin-right: 10px; border: 5px solid transparent; border-top-color: #104070; border-bottom: 0; }
.canvas { flex: 1; min-height: 0; margin-left: 2px; border: 1px solid #828790; border-top-width: 2px; }
.canvas svg { width: 100%; height: 100%; }
.dg { font: 11px "Liberation Sans", sans-serif; }
.dg-m { font: 12px "Liberation Sans", sans-serif; }
.dg-l { font: 13px "Liberation Sans", sans-serif; }
.dg-ui { font: 11px "DejaVu Sans", sans-serif; }
.navy { fill: #000080; }
.blue { fill: #2020e0; }

.status { flex: 0 0 28px; display: flex; align-items: flex-start; justify-content: flex-end; padding: 2px 0 0; }
.mode { display: flex; align-items: center; justify-content: center; gap: 4px; width: 98px; height: 23px; border: 1px solid #999; border-width: 1px 2px 2px 0; background: linear-gradient(#ddd, #f0f0f0); }
.mode.cur { width: 97px; height: 25px; border-width: 0 1px 1px; background: #fff; }
.size { align-self: flex-end; margin: 0 4px 4px 6px; }
```
